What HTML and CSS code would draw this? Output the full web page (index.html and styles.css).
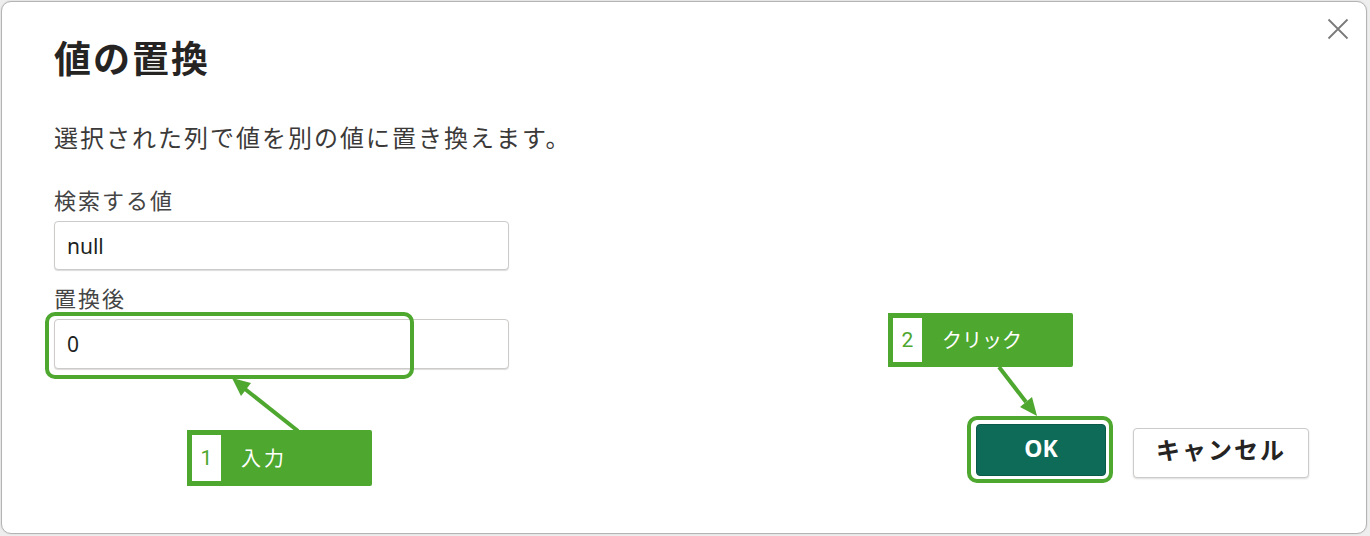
FILE: index.html
```html
<!DOCTYPE html>
<html lang="ja">
    <head>
        <meta charset="UTF-8" />
        <meta name="viewport" content="width=device-width, initial-scale=1.0" />
        <title>値の置換</title>
        <link rel="stylesheet" href="styles.css">
    </head>
    <body>
        <div class="screen">
            <div class="dialog">
                <button class="close" aria-label="閉じる">
                    <svg width="22" height="22" viewBox="0 0 22 22">
                        <path d="M1.5 1.5 L20.5 20.5 M20.5 1.5 L1.5 20.5" stroke="#7a7a7a" stroke-width="1.8" fill="none" />
                    </svg>
                </button>
                <h1 class="title">値の置換</h1>
                <p class="desc">選択された列で値を別の値に置き換えます。</p>
                <label class="field-label field-label-first">検索する値</label>
                <div class="field field-first">null</div>
                <label class="field-label field-label-second">置換後</label>
                <div class="field field-second">0</div>
                <div class="actions">
                    <button class="btn btn-primary">OK</button>
                    <button class="btn btn-default">キャンセル</button>
                </div>
            </div>

            <!-- annotations -->
            <div class="mark mark-input"></div>
            <div class="mark mark-ok"></div>
            <svg class="arrows" width="1370" height="536" viewBox="0 0 1370 536">
                <line x1="298" y1="431" x2="245" y2="389" stroke="#4ea72e" stroke-width="4" />
                <polygon points="232,378 251,383 241,396" fill="#4ea72e" />
                <line x1="999" y1="367" x2="1026" y2="402" stroke="#4ea72e" stroke-width="4" />
                <polygon points="1037,416 1032,397 1020,407" fill="#4ea72e" />
            </svg>
            <div class="callout callout-input">
                <span class="step">1</span>
                <span class="callout-text callout-text-wide">入力</span>
            </div>
            <div class="callout callout-ok">
                <span class="step">2</span>
                <span class="callout-text">クリック</span>
            </div>
        </div>
    </body>
</html>
```

FILE: styles.css
```css
* {
    margin: 0;
    padding: 0;
    box-sizing: border-box;
}
body {
    font-family: "Noto Sans", "Noto Sans CJK JP", sans-serif;
    background: #eeeeee;
    color: #252423;
}
.screen {
    position: relative;
    width: 1370px;
    height: 536px;
    padding: 1px 0 0 1px;
}
.dialog {
    position: relative;
    display: flex;
    flex-direction: column;
    align-items: flex-start;
    width: 1366px;
    height: 533px;
    padding: 37px 57px 55px 52px;
    background: #ffffff;
    border: 1px solid #b4b4b4;
    border-radius: 10px;
    box-shadow: 0 0 2px rgba(0, 0, 0, 0.12);
}
.close {
    position: absolute;
    top: 16px;
    right: 17px;
    width: 22px;
    height: 22px;
    border: none;
    background: none;
}
.close svg {
    display: block;
}
.title {
    font-family: "Noto Sans CJK JP", sans-serif;
    font-size: 37px;
    line-height: 37px;
    font-weight: 700;
    letter-spacing: 2px;
    color: #252423;
}
.desc {
    margin-top: 49px;
    font-family: "Noto Sans CJK JP", sans-serif;
    font-size: 24px;
    line-height: 24px;
    letter-spacing: 2px;
    color: #3b3a39;
}
.field-label {
    font-family: "Noto Sans CJK JP", sans-serif;
    font-size: 22px;
    line-height: 22px;
    letter-spacing: 2px;
    color: #444444;
}
.field-label-first {
    margin-top: 39px;
}
.field-label-second {
    margin-top: 16px;
}
.field {
    display: flex;
    align-items: center;
    margin-top: 11px;
    width: 455px;
    height: 49px;
    padding-left: 12px;
    font-size: 21px;
    color: #201f1e;
    background: #ffffff;
    border: 1px solid #cdcbc9;
    border-radius: 4px;
    box-shadow: 0 1px 1px rgba(0, 0, 0, 0.14);
}
.field-second {
    height: 50px;
}
.actions {
    display: flex;
    align-items: flex-end;
    gap: 27px;
    margin-top: auto;
    align-self: flex-end;
}
.btn {
    font-weight: 700;
    border-radius: 4px;
    font-family: "Noto Sans", "Noto Sans CJK JP", sans-serif;
    line-height: 1;
}
.btn-primary {
    width: 130px;
    height: 52px;
    margin-bottom: 2px;
    padding-bottom: 3px;
    font-size: 23px;
    color: #ffffff;
    background: #0d6b58;
    border: 1px solid #0a5a4a;
}
.btn-default {
    width: 176px;
    height: 50px;
    padding-bottom: 8px;
    font-family: "Noto Sans CJK JP", sans-serif;
    font-size: 24px;
    letter-spacing: 2px;
    color: #252423;
    background: #ffffff;
    border: 1px solid #cdcbc9;
    box-shadow: 0 1px 2px rgba(0, 0, 0, 0.14);
}

/* annotations */
.mark {
    position: absolute;
    border: 4px solid #4ea72e;
    border-radius: 10px;
}
.mark-input {
    left: 45px;
    top: 312px;
    width: 369px;
    height: 67px;
}
.mark-ok {
    left: 967px;
    top: 416px;
    width: 146px;
    height: 67px;
}
.arrows {
    position: absolute;
    left: 0;
    top: 0;
    pointer-events: none;
}
.callout {
    position: absolute;
    display: flex;
    align-items: center;
    width: 185px;
    padding: 5px;
    background: #4ea72e;
    border-radius: 0 2px 2px 0;
}
.callout-input {
    left: 187px;
    top: 430px;
    height: 56px;
}
.callout-ok {
    left: 888px;
    top: 313px;
    height: 54px;
}
.step {
    display: flex;
    align-items: center;
    justify-content: center;
    align-self: stretch;
    width: 29px;
    font-family: Roboto, sans-serif;
    font-size: 21px;
    color: #4ea72e;
    background: #ffffff;
}
.callout-text {
    margin-left: 20px;
    font-family: "Noto Sans CJK JP", sans-serif;
    font-size: 20px;
    line-height: 20px;
    color: #ffffff;
}
.callout-text-wide {
    letter-spacing: 3px;
}
```
